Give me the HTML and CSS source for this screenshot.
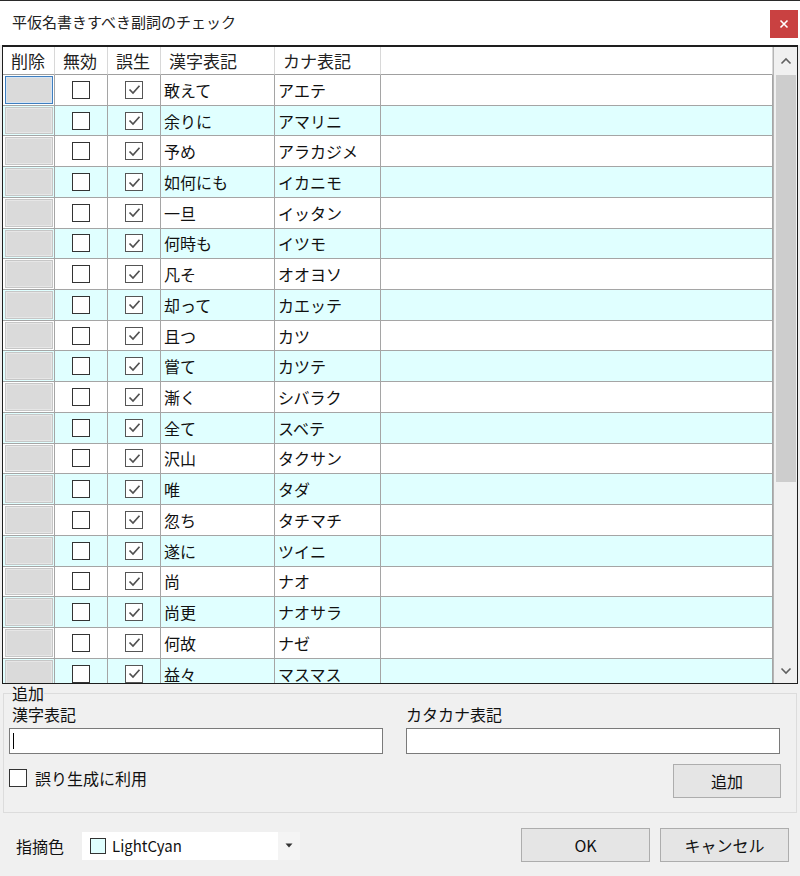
FILE: index.html
```html
<!DOCTYPE html>
<html lang="ja">
<head>
<meta charset="utf-8">
<title>平仮名書きすべき副詞のチェック</title>
<link rel="stylesheet" href="styles.css">
</head>
<body>
<div class="window">
  <div class="titlebar">
    <span class="title">平仮名書きすべき副詞のチェック</span>
    <div class="close"><svg width="10" height="10" viewBox="0 0 10 10"><path d="M1.5 1.5 L8.5 8.5 M8.5 1.5 L1.5 8.5" stroke="#fff" stroke-width="1.6"/></svg></div>
  </div>

  <div class="grid">
    <div class="table" id="table">
      <div class="row head">
        <div class="c">削除</div><div class="c">無効</div><div class="c">誤生</div><div class="c">漢字表記</div><div class="c">カナ表記</div><div class="c"></div>
      </div>
    </div>
    <div class="vscroll">
      <div class="arrow"><svg width="12" height="8" viewBox="0 0 12 8"><path d="M1.5 6.5 L6 2 L10.5 6.5" fill="none" stroke="#606060" stroke-width="1.6"/></svg></div>
      <div class="track"><div class="thumb"></div></div>
      <div class="arrow down"><svg width="12" height="8" viewBox="0 0 12 8"><path d="M1.5 1.5 L6 6 L10.5 1.5" fill="none" stroke="#606060" stroke-width="1.6"/></svg></div>
    </div>
  </div>

  <fieldset class="group">
    <legend>追加</legend>
    <div class="fields">
      <div class="field">
        <div class="flabel">漢字表記</div>
        <div class="input"><span class="caret"></span></div>
      </div>
      <div class="field right">
        <div class="flabel">カタカナ表記</div>
        <div class="input"></div>
      </div>
    </div>
    <div class="addrow">
      <label class="chk"><span class="box"></span><span>誤り生成に利用</span></label>
      <div class="btn add">追加</div>
    </div>
  </fieldset>

  <div class="footer">
    <span class="flbl">指摘色</span>
    <div class="combo">
      <span class="swatch"></span><span class="ctext">LightCyan</span>
      <span class="drop"><svg width="8" height="5" viewBox="0 0 8 5"><path d="M0.5 0.5 L7.5 0.5 L4 4.5 Z" fill="#333"/></svg></span>
    </div>
    <div class="spacer"></div>
    <div class="btn ok">OK</div>
    <div class="btn cancel">キャンセル</div>
  </div>
</div>
<script>
(function(){
  var data=[["敢えて","アエテ"],["余りに","アマリニ"],["予め","アラカジメ"],["如何にも","イカニモ"],["一旦","イッタン"],["何時も","イツモ"],["凡そ","オオヨソ"],["却って","カエッテ"],["且つ","カツ"],["嘗て","カツテ"],["漸く","シバラク"],["全て","スベテ"],["沢山","タクサン"],["唯","タダ"],["忽ち","タチマチ"],["遂に","ツイニ"],["尚","ナオ"],["尚更","ナオサラ"],["何故","ナゼ"],["益々","マスマス"]];
  var t=document.getElementById('table');
  var check='<svg width="15" height="15" viewBox="0 0 15 15"><path d="M2.5 7.5 L6 11 L12.5 3.8" fill="none" stroke="#505050" stroke-width="1.7"/></svg>';
  data.forEach(function(d,i){
    var r=document.createElement('div');
    r.className='row'+(i%2?' alt':'');
    r.innerHTML='<div class="c del"><span class="dbtn'+(i===0?' focus':'')+'"></span></div>'+
      '<div class="c mid"><span class="cb"></span></div>'+
      '<div class="c mid"><span class="cb on">'+check+'</span></div>'+
      '<div class="c txt">'+d[0]+'</div>'+
      '<div class="c txt">'+d[1]+'</div>'+
      '<div class="c"></div>';
    t.appendChild(r);
  });
})();
</script>
</body>
</html>
```

FILE: styles.css
```css
* { box-sizing: border-box; }
html, body { margin: 0; padding: 0; }
body {
  width: 800px;
  height: 876px;
  overflow: hidden;
  background: #f0f0f0;
  font-family: "Noto Sans CJK JP", "Noto Sans", sans-serif;
  font-size: 15px;
  color: #111;
}
.window { width: 800px; height: 876px; display: flex; flex-direction: column; border-top: 1px solid #2a2a2a; }

.titlebar {
  height: 44px;
  background: #fff;
  display: flex;
  align-items: center;
  padding-left: 12px;
  padding-right: 2px;
}
.title { flex: 1; font-size: 15px; line-height: 20px; color: #222; margin-top: -2px; }
.close {
  width: 28px; height: 28px;
  background: #c94141;
  display: flex; align-items: center; justify-content: center;
  margin-top: 2px;
}

.grid {
  height: 639px;
  margin-left: 2px;
  width: 796px;
  border: 1px solid #1e1e1e;
  border-top-width: 2px;
  background: #fff;
  display: flex;
  overflow: hidden;
}
.table { width: 770px; overflow: hidden; flex: none; }
.row {
  display: grid;
  grid-template-columns: 52px 53px 53px 114px 106px 1fr;
  height: 30.72px;
  background: #fff;
}
.row.alt { background: #e0ffff; }
.row.head { height: 28px; }
.c {
  border-right: 1px solid #a5a5a5;
  border-bottom: 1px solid #a5a5a5;
  display: flex;
  align-items: center;
  line-height: 18px;
  font-size: 16px;
  overflow: hidden;
  white-space: nowrap;
}
.row.head .c { border-right-color: #d8d8d8; border-bottom-color: #a0a0a0; padding-left: 8px; color: #222; font-size: 17px; }
.row.head .c:nth-child(4), .row.head .c:nth-child(5) { padding-left: 8px; }
.c.txt { padding-left: 3px; }
.c.mid { justify-content: center; }
.c.del { padding: 1px 1px 1px 2px; background: #fff; }
.row.alt .c.del { background: #e0ffff; }
.dbtn {
  display: block;
  width: 100%;
  height: 100%;
  background: #dadada;
  border: 1px solid #c6c6c6;
  box-shadow: inset 0 0 0 1px #e6e6e6;
}
.dbtn.focus { border-color: #3f7fc0; box-shadow: inset 0 0 0 1px #d6e4f3; }
.cb {
  width: 18px; height: 18px;
  border: 1px solid #333;
  background: #fff;
  display: flex; align-items: center; justify-content: center;
}
.cb.on { border-color: #555; }

.vscroll {
  width: 24px;
  flex: none;
  background: #f0f0f0;
  display: flex;
  flex-direction: column;
  border-left: 1px solid #b5b5b5;
}
.arrow { height: 28px; display: flex; align-items: center; justify-content: center; flex: none; }
.arrow.down { height: 24px; }
.track { flex: 1; padding: 0 1px 0 2px; }
.thumb { height: 407px; background: #cdcdcd; }

.group {
  margin: 0 3px;
  padding: 0 15px 14px 5px;
  border: 1px solid #dcdcdc;
  height: 129px;
  min-width: 0;
}
.group legend {
  padding: 0;
  margin-left: 3px;
  font-size: 16px;
  line-height: 18px;
  height: 18px;
}
.fields { display: flex; gap: 23px; margin-top: 3px; }
.field { width: 374px; }
.flabel { font-size: 16px; line-height: 18px; height: 18px; padding-left: 3px; }
.field.right .flabel { padding-left: 0; }
.input {
  margin-top: 5px;
  height: 26px;
  background: #fff;
  border: 1px solid #7a7a7a;
  display: flex;
  align-items: center;
  padding-left: 3px;
}
.caret { width: 1px; height: 16px; background: #000; }
.addrow {
  display: flex;
  justify-content: space-between;
  align-items: center;
  margin-top: 10px;
}
.chk { display: flex; align-items: center; gap: 8px; font-size: 16px; line-height: 18px; margin-top: -6px; }
.box { width: 18px; height: 18px; border: 1px solid #333; background: #fff; display: block; }

.btn {
  border: 1px solid #adadad;
  background: #e5e5e5;
  display: flex;
  align-items: center;
  justify-content: center;
  font-size: 16px;
  line-height: 18px;
  height: 34px;
  color: #111;
}
.btn.add { width: 108px; }

.footer {
  flex: 1;
  display: flex;
  align-items: center;
  padding: 0 11px 0 16px;
}
.flbl { font-size: 16px; line-height: 18px; margin-top: 2px; }
.combo {
  margin-left: 18px;
  width: 218px;
  height: 28px;
  background: #fff;
  display: flex;
  align-items: center;
  margin-top: 2px;
}
.swatch { width: 16px; height: 16px; background: #e0ffff; border: 1px solid #333; margin-left: 8px; }
.ctext { margin-left: 6px; font-size: 15px; line-height: 18px; flex: 1; }
.drop {
  width: 22px; height: 28px;
  background: #f4f4f4;
  display: flex; align-items: center; justify-content: center;
}
.spacer { flex: 1; }
.btn.ok, .btn.cancel { width: 129px; }
.btn.cancel { margin-left: 10px; }
```
